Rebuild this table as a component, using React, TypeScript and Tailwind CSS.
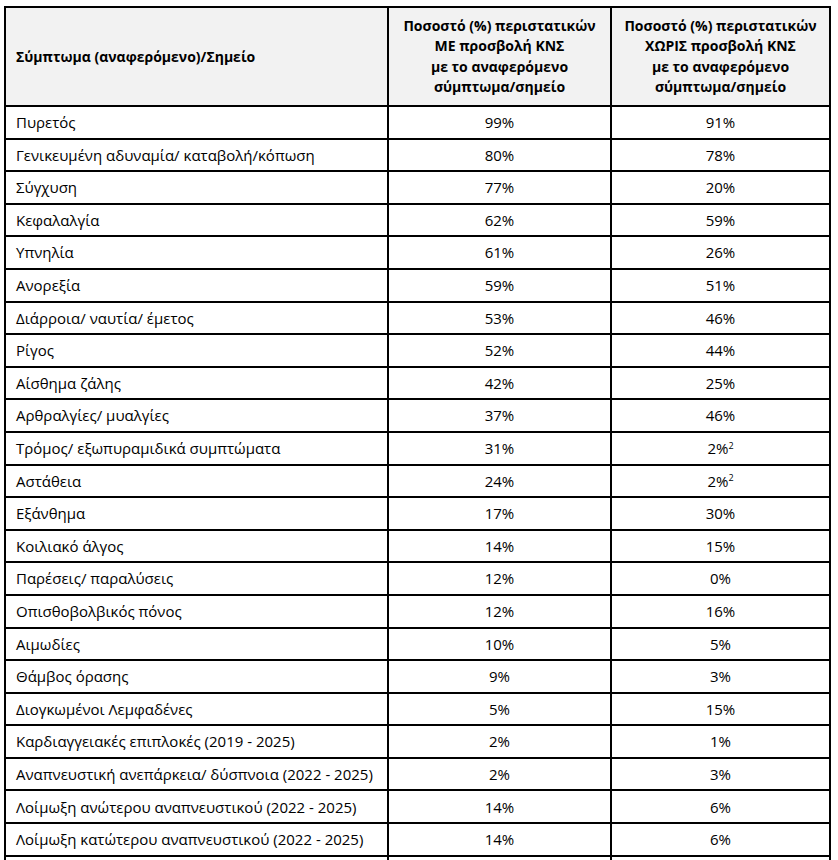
import React from "react";

type Row = {
  name: string;
  withCns: string;
  withoutCns: string;
  note?: boolean;
};

const rows: Row[] = [
  { name: "Πυρετός", withCns: "99%", withoutCns: "91%" },
  { name: "Γενικευμένη αδυναμία/ καταβολή/κόπωση", withCns: "80%", withoutCns: "78%" },
  { name: "Σύγχυση", withCns: "77%", withoutCns: "20%" },
  { name: "Κεφαλαλγία", withCns: "62%", withoutCns: "59%" },
  { name: "Υπνηλία", withCns: "61%", withoutCns: "26%" },
  { name: "Ανορεξία", withCns: "59%", withoutCns: "51%" },
  { name: "Διάρροια/ ναυτία/ έμετος", withCns: "53%", withoutCns: "46%" },
  { name: "Ρίγος", withCns: "52%", withoutCns: "44%" },
  { name: "Αίσθημα ζάλης", withCns: "42%", withoutCns: "25%" },
  { name: "Αρθραλγίες/ μυαλγίες", withCns: "37%", withoutCns: "46%" },
  { name: "Τρόμος/ εξωπυραμιδικά συμπτώματα", withCns: "31%", withoutCns: "2%", note: true },
  { name: "Αστάθεια", withCns: "24%", withoutCns: "2%", note: true },
  { name: "Εξάνθημα", withCns: "17%", withoutCns: "30%" },
  { name: "Κοιλιακό άλγος", withCns: "14%", withoutCns: "15%" },
  { name: "Παρέσεις/ παραλύσεις", withCns: "12%", withoutCns: "0%" },
  { name: "Οπισθοβολβικός πόνος", withCns: "12%", withoutCns: "16%" },
  { name: "Αιμωδίες", withCns: "10%", withoutCns: "5%" },
  { name: "Θάμβος όρασης", withCns: "9%", withoutCns: "3%" },
  { name: "Διογκωμένοι Λεμφαδένες", withCns: "5%", withoutCns: "15%" },
  { name: "Καρδιαγγειακές επιπλοκές (2019 - 2025)", withCns: "2%", withoutCns: "1%" },
  { name: "Αναπνευστική ανεπάρκεια/ δύσπνοια (2022 - 2025)", withCns: "2%", withoutCns: "3%" },
  { name: "Λοίμωξη ανώτερου αναπνευστικού (2022 - 2025)", withCns: "14%", withoutCns: "6%" },
  { name: "Λοίμωξη κατώτερου αναπνευστικού (2022 - 2025)", withCns: "14%", withoutCns: "6%" },
];

const SymptomTable = () => {
  return (
    <div className="bg-white min-h-[860px] pt-[6px] pl-[4px] font-['Open_Sans',sans-serif] text-black">
      <table className="border-collapse table-fixed w-[825px]">
        <colgroup>
          <col className="w-[383px]" />
          <col className="w-[223px]" />
          <col className="w-[219px]" />
        </colgroup>
        <thead>
          <tr className="bg-[#f2f2f2] h-[99px]">
            <th className="border-2 border-black text-left align-middle pl-[10px] text-[14px] font-bold">
              Σύμπτωμα (αναφερόμενο)/Σημείο
            </th>
            <th className="border-2 border-black text-center align-middle text-[14px] font-bold leading-[20.5px]">
              Ποσοστό (%) περιστατικών
              <br />
              ΜΕ προσβολή ΚΝΣ
              <br />
              με το αναφερόμενο
              <br />
              σύμπτωμα/σημείο
            </th>
            <th className="border-2 border-black text-center align-middle text-[14px] font-bold leading-[20.5px]">
              Ποσοστό (%) περιστατικών
              <br />
              ΧΩΡΙΣ προσβολή ΚΝΣ
              <br />
              με το αναφερόμενο
              <br />
              σύμπτωμα/σημείο
            </th>
          </tr>
        </thead>
        <tbody className="text-[15px]">
          {rows.map((row, index) => (
            <tr key={index} className="h-[32.6px]">
              <td className="border-2 border-black pl-[10px] align-middle">
                {row.name}
              </td>
              <td className="border-2 border-black text-center align-middle">
                {row.withCns}
              </td>
              <td className="border-2 border-black text-center align-middle">
                {row.withoutCns}
                {row.note && <sup className="text-[9px] top-[-0.6em]">2</sup>}
              </td>
            </tr>
          ))}
          <tr className="h-[32px]">
            <td className="border-x-2 border-black" />
            <td className="border-x-2 border-black" />
            <td className="border-x-2 border-black" />
          </tr>
        </tbody>
      </table>
    </div>
  );
};

export default function App() {
  return <SymptomTable />;
}
